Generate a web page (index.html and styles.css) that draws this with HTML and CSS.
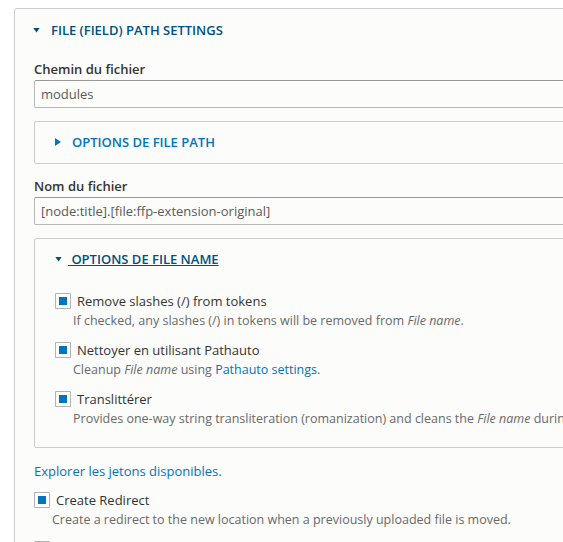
FILE: index.html
```html
<!DOCTYPE html>
<html lang="fr">
  <head>
    <meta charset="UTF-8" />
    <meta name="viewport" content="width=device-width, initial-scale=1.0" />
    <title>File (field) path settings</title>
    <link rel="stylesheet" href="styles.css">
  </head>
  <body>
    <details class="panel" open>
      <summary class="panel-title is-dark">File (field) path settings</summary>
      <div class="panel-body">
        <div class="form-item">
          <label class="form-label" for="filePath">Chemin du fichier</label>
          <input class="form-text" type="text" id="filePath" value="modules" />
        </div>

        <details class="subpanel">
          <summary class="panel-title">Options de File path</summary>
        </details>

        <div class="form-item">
          <label class="form-label" for="fileName">Nom du fichier</label>
          <input class="form-text" type="text" id="fileName" value="[node:title].[file:ffp-extension-original]" />
        </div>

        <details class="subpanel" open>
          <summary class="panel-title is-dark is-focused"><span>&nbsp;Options de File name</span></summary>
          <div class="subpanel-body">
            <div class="check-item">
              <label class="check-row">
                <input type="checkbox" checked />
                <span>Remove slashes (/) from tokens</span>
              </label>
              <div class="description">If checked, any slashes (/) in tokens will be removed from <em>File name</em>.</div>
            </div>
            <div class="check-item">
              <label class="check-row">
                <input type="checkbox" checked />
                <span>Nettoyer en utilisant Pathauto</span>
              </label>
              <div class="description">Cleanup <em>File name</em> using <a href="#">Pathauto settings</a>.</div>
            </div>
            <div class="check-item">
              <label class="check-row">
                <input type="checkbox" checked />
                <span>Translittérer</span>
              </label>
              <div class="description">Provides one-way string transliteration (romanization) and cleans the <em>File name</em> during upload by replacing unwanted characters.</div>
            </div>
          </div>
        </details>

        <a class="token-link" href="#">Explorer les jetons disponibles.</a>

        <div class="check-item is-outer">
          <label class="check-row">
            <input type="checkbox" checked />
            <span>Create Redirect</span>
          </label>
          <div class="description">Create a redirect to the new location when a previously uploaded file is moved.</div>
        </div>
        <div class="check-item">
          <label class="check-row">
            <input type="checkbox" aria-label="Retroactive update" />
          </label>
        </div>
      </div>
    </details>
  </body>
</html>
```

FILE: styles.css
```css
html,
body {
  overflow: hidden;
}
body {
  margin: 0;
  background-color: #fff;
  font-family: "Open Sans", "Liberation Sans", sans-serif;
  font-size: 13px;
  line-height: 18px;
  color: #333;
}
a {
  color: #0074bd;
  text-decoration: none;
}
.panel {
  width: 700px;
  margin: 8px 0 0 14px;
  border: 1px solid #ccc;
  border-radius: 3px 0 0 0;
  background-color: #fcfcfa;
}
.panel-title {
  display: flex;
  align-items: center;
  list-style: none;
  padding: 11px 18px;
  line-height: 20px;
  font-weight: 600;
  text-transform: uppercase;
  color: #0074bd;
  cursor: pointer;
}
.panel-title::-webkit-details-marker {
  display: none;
}
/* closed: right-pointing arrow */
.panel-title::before {
  content: "";
  flex: none;
  width: 6px;
  height: 8px;
  margin-right: 11px;
  background-color: currentColor;
  clip-path: polygon(0 0, 100% 50%, 0 100%);
}
/* open: down-pointing arrow */
details[open] > .panel-title::before {
  width: 7px;
  height: 5px;
  clip-path: polygon(0 0, 100% 0, 50% 100%);
}
.panel-title.is-dark {
  color: #004f80;
}
.panel-title.is-focused::before {
  margin-right: 6px;
}
.panel-title.is-focused span {
  text-decoration: underline;
}
.panel-body {
  padding: 0 19px;
}
.form-item {
  margin-top: 13px;
}
.panel-body > .form-item:first-child {
  margin-top: 9px;
}
.form-label {
  display: block;
  margin-bottom: 2px;
  font-weight: 600;
}
.form-text {
  display: block;
  box-sizing: border-box;
  width: 100%;
  height: 28px;
  padding: 0 6px;
  border: 1px solid #b8b8b8;
  border-top-color: #999;
  border-radius: 2px;
  background-color: #fcfcfa;
  font-family: inherit;
  font-size: 13px;
  color: #595959;
}
.subpanel {
  margin-top: 13px;
  border: 1px solid #ccc;
  border-radius: 2px;
  background-color: #fcfcfa;
}
.subpanel > .panel-title {
  padding: 10px 20px 11px;
}
.subpanel-body {
  padding: 12px 20px 19px;
}
.check-item + .check-item {
  margin-top: 11px;
}
.check-row {
  display: flex;
  align-items: center;
  gap: 6px;
  min-height: 18px;
  cursor: pointer;
}
.check-row input {
  appearance: none;
  flex: none;
  width: 16px;
  height: 16px;
  margin: 0;
  border: 1px solid #b3b3b3;
  border-radius: 1px;
  background-color: #fff;
}
.check-row input:checked {
  background-color: #0074bd;
  box-shadow: inset 0 0 0 3px #fff;
}
.description {
  margin-top: 2px;
  padding-left: 18px;
  font-size: 12.5px;
  color: #68696b;
  white-space: nowrap;
}
.token-link {
  display: block;
  margin-top: 14px;
}
.token-link + .check-item {
  margin-top: 11px;
}
```
